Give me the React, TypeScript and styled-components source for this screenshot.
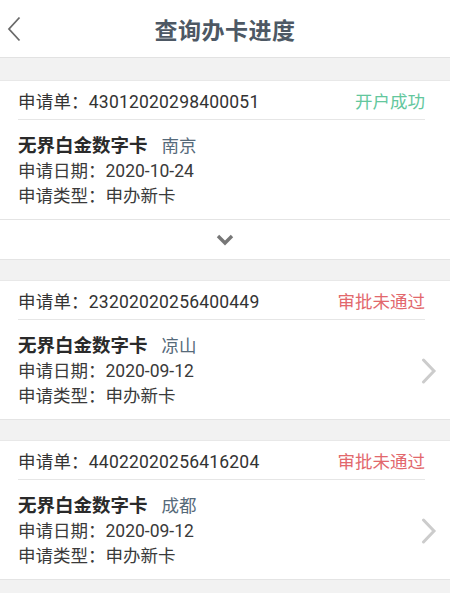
import styled, { createGlobalStyle } from "styled-components";

const GlobalStyle = createGlobalStyle`
  html, body {
    margin: 0;
    padding: 0;
    background: #f2f2f2;
    font-family: Roboto, "Noto Sans CJK SC", "Noto Sans", sans-serif;
    color: #333333;
  }
`;

const Page = styled.div`
  min-height: 593px;
  background: #f2f2f2;
`;

const Header = styled.header`
  display: grid;
  grid-template-columns: 48px 1fr 48px;
  align-items: center;
  height: 57px;
  background: #ffffff;
  border-bottom: 1px solid #e2e2e2;
`;

const BackButton = styled.button`
  display: flex;
  align-items: center;
  justify-content: flex-start;
  padding: 0 0 0 7px;
  height: 100%;
  border: none;
  background: transparent;
  color: #666666;
`;

const Title = styled.h1`
  margin: 0;
  text-align: center;
  font-size: 23px;
  font-weight: 700;
  color: #4d5864;
  letter-spacing: 0.5px;
`;

const List = styled.div`
  display: flex;
  flex-direction: column;
  gap: 20px;
  padding-top: 22px;
`;

const Card = styled.section`
  background: #ffffff;
  border-top: 1px solid #e8e8e8;
  border-bottom: 1px solid #e4e4e4;
`;

const CardHeader = styled.div`
  display: flex;
  align-items: center;
  justify-content: space-between;
  height: 38px;
  margin: 0 25px 0 18px;
  border-bottom: 1px solid #e6e6e6;
  font-size: 17.5px;
`;

const OrderNo = styled.span`
  letter-spacing: 0.2px;
`;

const Status = styled.span<{ $ok?: boolean }>`
  color: ${(p) => (p.$ok ? "#63c79d" : "#e2686c")};
`;

const CardBody = styled.div`
  display: flex;
  align-items: center;
  justify-content: space-between;
  padding: 13px 13px 11px 18px;
`;

const Info = styled.div`
  display: flex;
  flex-direction: column;
`;

const Line = styled.div`
  font-size: 17.5px;
  line-height: 24.5px;
  color: #3a3a3a;
`;

const CardName = styled.div`
  display: flex;
  align-items: baseline;
  gap: 14px;
  line-height: 26px;
`;

const Product = styled.span`
  font-size: 18.5px;
  font-weight: 700;
  color: #2a2a2a;
`;

const City = styled.span`
  font-size: 17.5px;
  color: #566a7a;
`;

const Expand = styled.div`
  display: flex;
  align-items: center;
  justify-content: center;
  height: 39px;
  border-top: 1px solid #e4e4e4;
`;

const BackIcon = () => (
  <svg width="14" height="26" viewBox="0 0 14 26">
    <path d="M12.5 1.5 L2 13 L12.5 24.5" fill="none" stroke="#6a6a6a" strokeWidth="1.8" />
  </svg>
);

const DownIcon = () => (
  <svg width="18" height="12" viewBox="0 0 18 12">
    <path d="M2 2 L9 9 L16 2" fill="none" stroke="#777777" strokeWidth="3.4" />
  </svg>
);

const RightIcon = () => (
  <svg width="16" height="26" viewBox="0 0 16 26">
    <path d="M2.5 2 L13 13 L2.5 24" fill="none" stroke="#cccccc" strokeWidth="3" strokeLinecap="round" />
  </svg>
);

interface Order {
  no: string;
  status: string;
  ok?: boolean;
  city: string;
  date: string;
  expandable?: boolean;
}

const orders: Order[] = [
  { no: "43012020298400051", status: "开户成功", ok: true, city: "南京", date: "2020-10-24", expandable: true },
  { no: "23202020256400449", status: "审批未通过", city: "凉山", date: "2020-09-12" },
  { no: "44022020256416204", status: "审批未通过", city: "成都", date: "2020-09-12" },
];

function OrderCard({ order }: { order: Order }) {
  return (
    <Card>
      <CardHeader>
        <OrderNo>申请单：{order.no}</OrderNo>
        <Status $ok={order.ok}>{order.status}</Status>
      </CardHeader>
      <CardBody>
        <Info>
          <CardName>
            <Product>无界白金数字卡</Product>
            <City>{order.city}</City>
          </CardName>
          <Line>申请日期：{order.date}</Line>
          <Line>申请类型：申办新卡</Line>
        </Info>
        {!order.expandable && <RightIcon />}
      </CardBody>
      {order.expandable && (
        <Expand>
          <DownIcon />
        </Expand>
      )}
    </Card>
  );
}

export default function App() {
  return (
    <Page>
      <GlobalStyle />
      <Header>
        <BackButton aria-label="返回">
          <BackIcon />
        </BackButton>
        <Title>查询办卡进度</Title>
        <span />
      </Header>
      <List>
        {orders.map((o) => (
          <OrderCard key={o.no} order={o} />
        ))}
      </List>
    </Page>
  );
}
